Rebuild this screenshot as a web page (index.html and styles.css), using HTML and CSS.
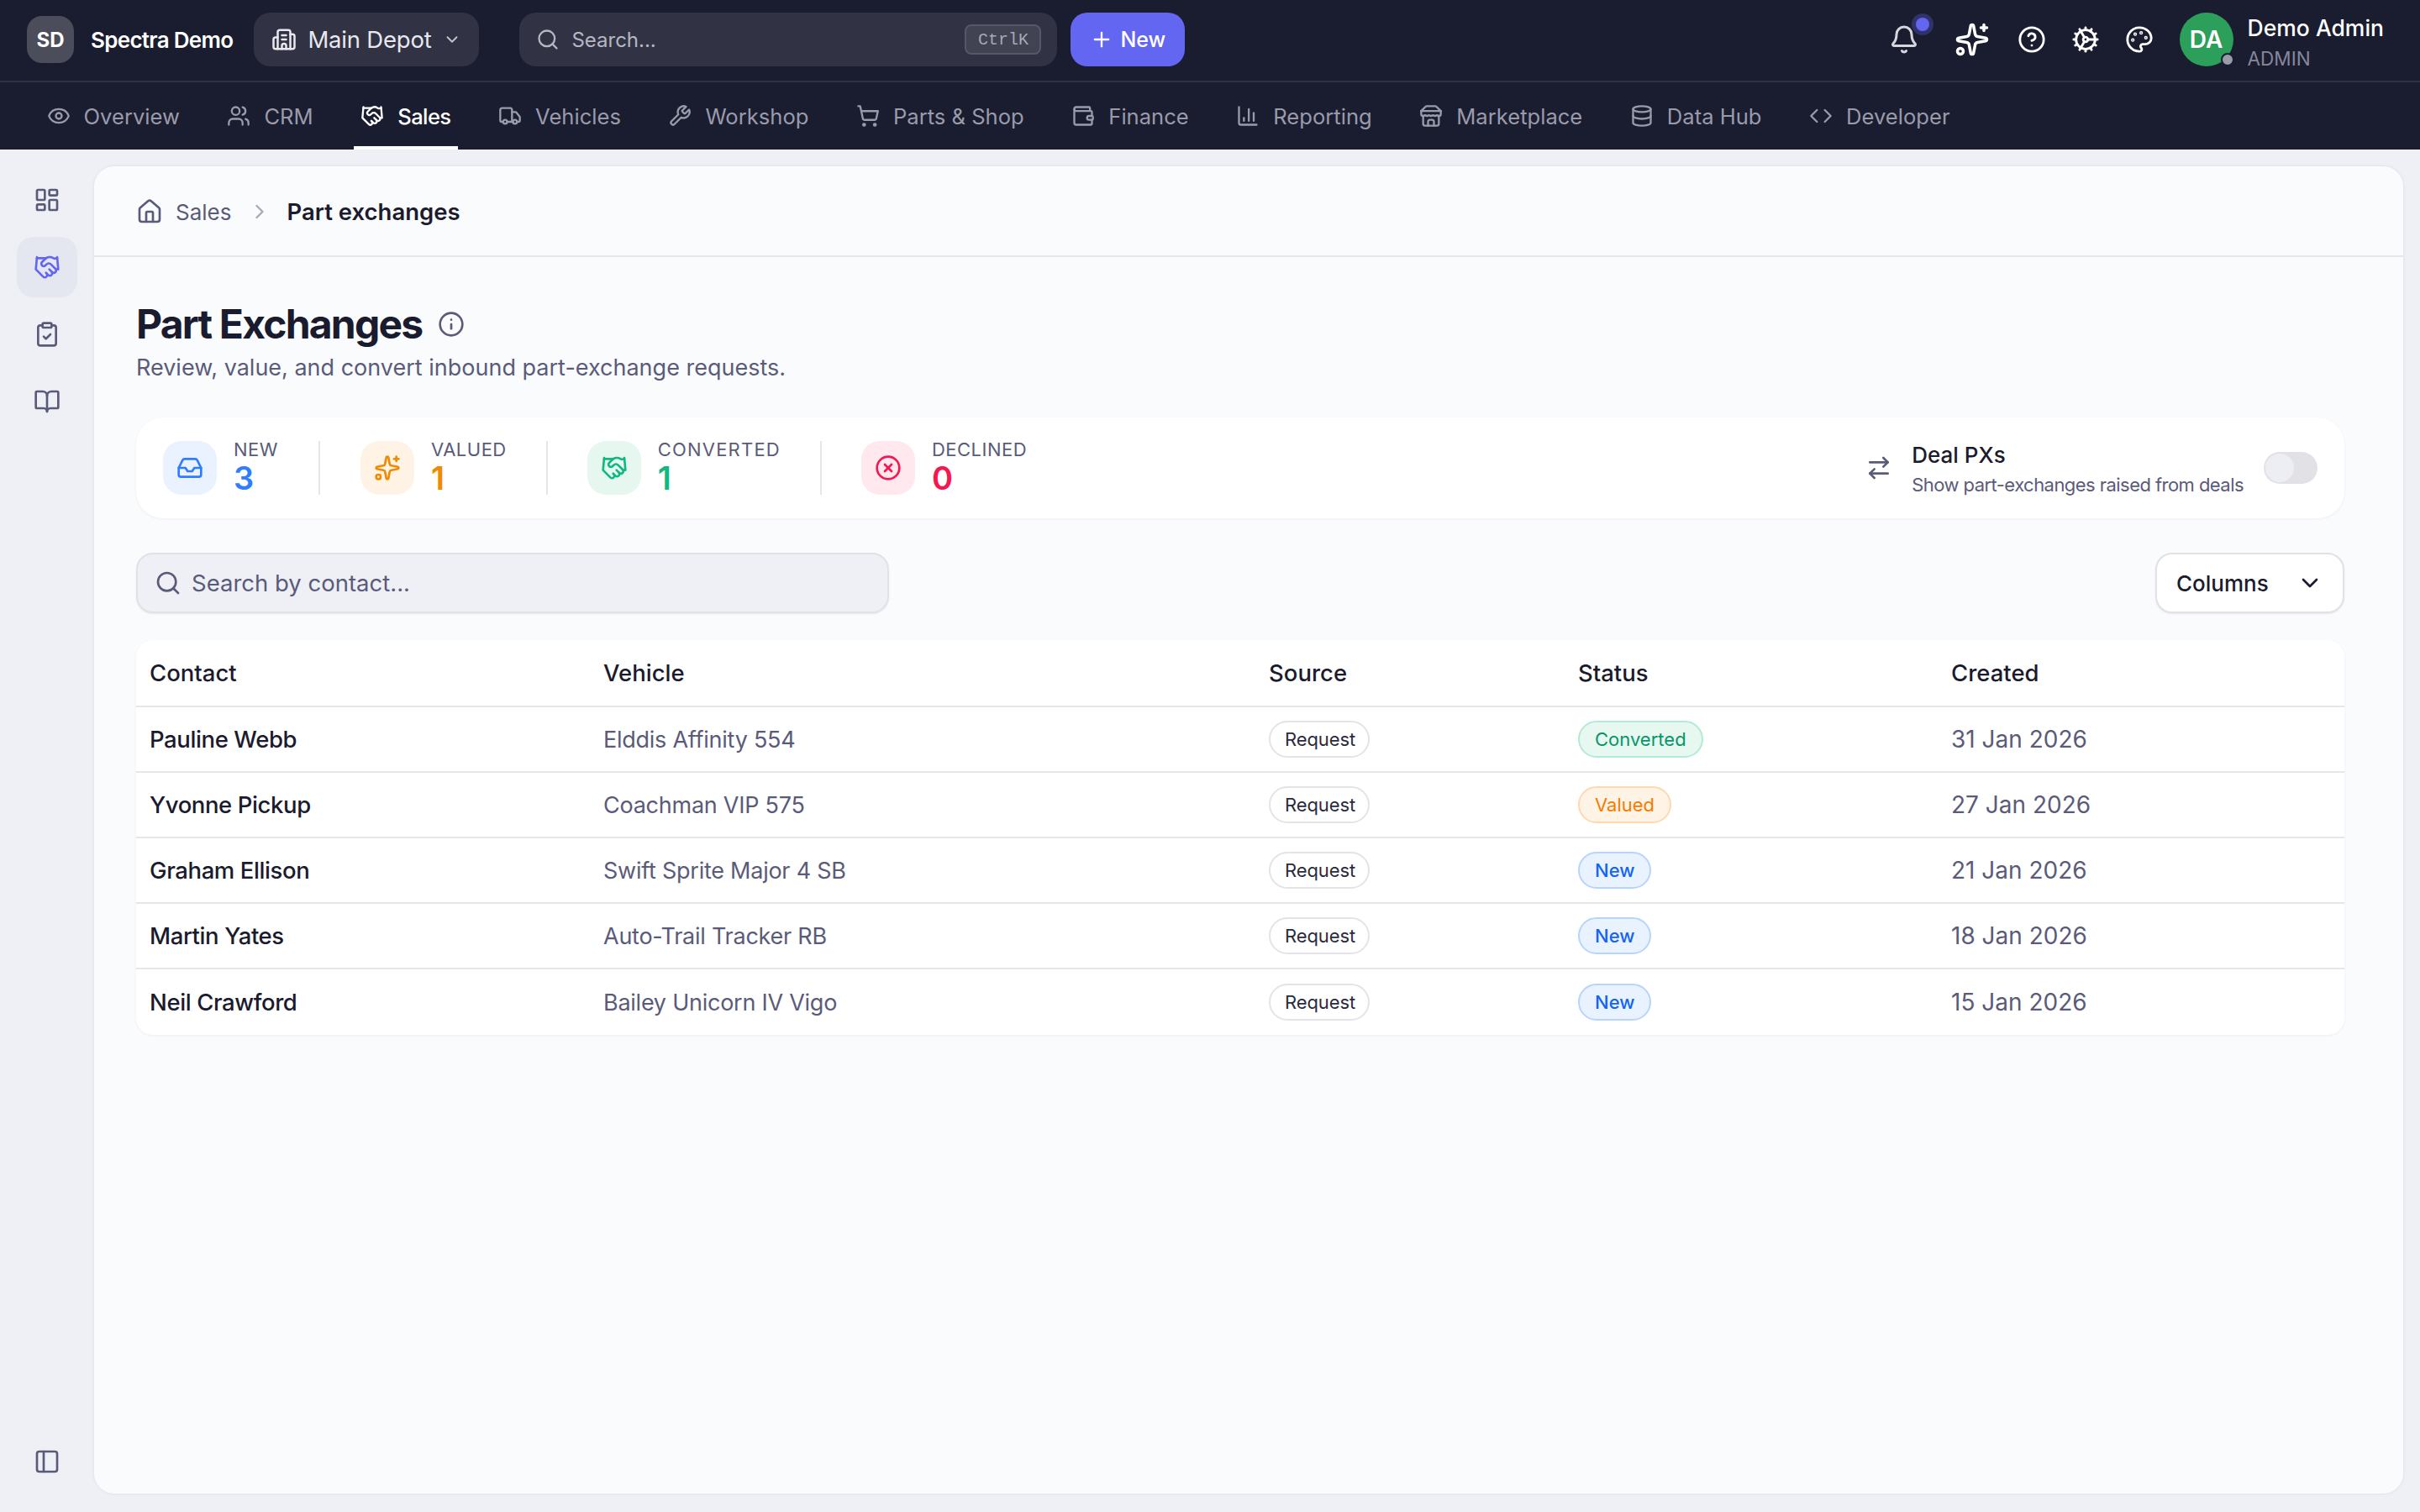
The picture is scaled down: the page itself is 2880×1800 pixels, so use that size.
FILE: index.html
```html
<!DOCTYPE html>
<html lang="en">
<head>
<meta charset="utf-8">
<title>Part Exchanges</title>
<link rel="stylesheet" href="styles.css">
</head>
<body>
<svg class="sprite" xmlns="http://www.w3.org/2000/svg">
  <symbol id="i-dash" viewBox="0 0 24 24"><rect width="7" height="9" x="3" y="3" rx="1"/><rect width="7" height="5" x="14" y="3" rx="1"/><rect width="7" height="9" x="14" y="12" rx="1"/><rect width="7" height="5" x="3" y="16" rx="1"/></symbol>
  <symbol id="i-hand" viewBox="0 0 24 24"><path d="m11 17 2 2a1 1 0 1 0 3-3"/><path d="m14 14 2.5 2.5a1 1 0 1 0 3-3l-3.88-3.88a3 3 0 0 0-4.24 0l-.88.88a1 1 0 1 1-3-3l2.81-2.81a5.79 5.79 0 0 1 7.06-.87l.47.28a2 2 0 0 0 1.42.25L21 4"/><path d="m21 3 1 11h-2"/><path d="M3 3 2 14l6.5 6.5a1 1 0 1 0 3-3"/><path d="M3 4h8"/></symbol>
  <symbol id="i-clip" viewBox="0 0 24 24"><rect width="8" height="4" x="8" y="2" rx="1" ry="1"/><path d="M16 4h2a2 2 0 0 1 2 2v14a2 2 0 0 1-2 2H6a2 2 0 0 1-2-2V6a2 2 0 0 1 2-2h2"/><path d="m9 14 2 2 4-4"/></symbol>
  <symbol id="i-book" viewBox="0 0 24 24"><path d="M12 7v14"/><path d="M3 18a1 1 0 0 1-1-1V4a1 1 0 0 1 1-1h5a4 4 0 0 1 4 4 4 4 0 0 1 4-4h5a1 1 0 0 1 1 1v13a1 1 0 0 1-1 1h-6a3 3 0 0 0-3 3 3 3 0 0 0-3-3z"/></symbol>
  <symbol id="i-panel" viewBox="0 0 24 24"><rect width="18" height="18" x="3" y="3" rx="2"/><path d="M9 3v18"/></symbol>
  <symbol id="i-house" viewBox="0 0 24 24"><path d="M15 21v-8a1 1 0 0 0-1-1h-4a1 1 0 0 0-1 1v8"/><path d="M3 10a2 2 0 0 1 .709-1.528l7-5.999a2 2 0 0 1 2.582 0l7 5.999A2 2 0 0 1 21 10v9a2 2 0 0 1-2 2H5a2 2 0 0 1-2-2z"/></symbol>
  <symbol id="i-right" viewBox="0 0 24 24"><path d="m9 18 6-6-6-6"/></symbol>
  <symbol id="i-down" viewBox="0 0 24 24"><path d="m6 9 6 6 6-6"/></symbol>
  <symbol id="i-info" viewBox="0 0 24 24"><circle cx="12" cy="12" r="10"/><path d="M12 16v-4"/><path d="M12 8h.01"/></symbol>
  <symbol id="i-inbox" viewBox="0 0 24 24"><polyline points="22 12 16 12 14 15 10 15 8 12 2 12"/><path d="M5.45 5.11 2 12v6a2 2 0 0 0 2 2h16a2 2 0 0 0 2-2v-6l-3.45-6.89A2 2 0 0 0 16.76 4H7.24a2 2 0 0 0-1.79 1.11z"/></symbol>
  <symbol id="i-spark" viewBox="0 0 24 24"><path d="M11.017 2.814a1 1 0 0 1 1.966 0l1.051 5.558a2 2 0 0 0 1.594 1.594l5.558 1.051a1 1 0 0 1 0 1.966l-5.558 1.051a2 2 0 0 0-1.594 1.594l-1.051 5.558a1 1 0 0 1-1.966 0l-1.051-5.558a2 2 0 0 0-1.594-1.594l-5.558-1.051a1 1 0 0 1 0-1.966l5.558-1.051a2 2 0 0 0 1.594-1.594z"/><path d="M20 2v4"/><path d="M22 4h-4"/><circle cx="4" cy="20" r="2"/></symbol>
  <symbol id="i-x" viewBox="0 0 24 24"><circle cx="12" cy="12" r="10"/><path d="m15 9-6 6"/><path d="m9 9 6 6"/></symbol>
  <symbol id="i-swap" viewBox="0 0 24 24"><path d="m16 3 4 4-4 4"/><path d="M20 7H4"/><path d="m8 21-4-4 4-4"/><path d="M4 17h16"/></symbol>
  <symbol id="i-search" viewBox="0 0 24 24"><path d="m21 21-4.34-4.34"/><circle cx="11" cy="11" r="8"/></symbol>
  <symbol id="i-bell" viewBox="0 0 24 24"><path d="M10.268 21a2 2 0 0 0 3.464 0"/><path d="M3.262 15.326A1 1 0 0 0 4 17h16a1 1 0 0 0 .74-1.673C19.41 13.956 18 12.499 18 8A6 6 0 0 0 6 8c0 4.499-1.411 5.956-2.738 7.326"/></symbol>
  <symbol id="i-help" viewBox="0 0 24 24"><circle cx="12" cy="12" r="10"/><path d="M9.09 9a3 3 0 0 1 5.83 1c0 2-3 3-3 3"/><path d="M12 17h.01"/></symbol>
  <symbol id="i-cog" viewBox="0 0 24 24"><path d="M12 20a8 8 0 1 0 0-16 8 8 0 0 0 0 16Z"/><path d="M12 14a2 2 0 1 0 0-4 2 2 0 0 0 0 4Z"/><path d="M12 2v2"/><path d="M12 22v-2"/><path d="m17 20.66-1-1.73"/><path d="M11 10.27 7 3.34"/><path d="m20.66 17-1.73-1"/><path d="m3.34 7 1.73 1"/><path d="M14 12h8"/><path d="M2 12h2"/><path d="m20.66 7-1.73 1"/><path d="m3.34 17 1.73-1"/><path d="m17 3.34-1 1.73"/><path d="m11 13.73-4 6.93"/></symbol>
  <symbol id="i-palette" viewBox="0 0 24 24"><path d="M12 22a1 1 0 0 1 0-20 10 9 0 0 1 10 9 5 5 0 0 1-5 5h-2.25a1.75 1.75 0 0 0-1.4 2.8l.3.4a1.75 1.75 0 0 1-1.4 2.8z"/><circle cx="13.5" cy="6.5" r=".5"/><circle cx="17.5" cy="10.5" r=".5"/><circle cx="6.5" cy="12.5" r=".5"/><circle cx="8.5" cy="7.5" r=".5"/></symbol>
  <symbol id="i-eye" viewBox="0 0 24 24"><path d="M2.062 12.348a1 1 0 0 1 0-.696 10.75 10.75 0 0 1 19.876 0 1 1 0 0 1 0 .696 10.75 10.75 0 0 1-19.876 0"/><circle cx="12" cy="12" r="3"/></symbol>
  <symbol id="i-users" viewBox="0 0 24 24"><path d="M16 21v-2a4 4 0 0 0-4-4H6a4 4 0 0 0-4 4v2"/><path d="M16 3.128a4 4 0 0 1 0 7.744"/><path d="M22 21v-2a4 4 0 0 0-3-3.87"/><circle cx="9" cy="7" r="4"/></symbol>
  <symbol id="i-truck" viewBox="0 0 24 24"><path d="M14 18V6a2 2 0 0 0-2-2H4a2 2 0 0 0-2 2v11a1 1 0 0 0 1 1h2"/><path d="M15 18H9"/><path d="M19 18h2a1 1 0 0 0 1-1v-3.65a1 1 0 0 0-.22-.624l-3.48-4.35A1 1 0 0 0 17.52 8H14"/><circle cx="17" cy="18" r="2"/><circle cx="7" cy="18" r="2"/></symbol>
  <symbol id="i-wrench" viewBox="0 0 24 24"><path d="M14.7 6.3a1 1 0 0 0 0 1.4l1.6 1.6a1 1 0 0 0 1.4 0l3.77-3.77a6 6 0 0 1-7.94 7.94l-6.91 6.91a2.12 2.12 0 0 1-3-3l6.91-6.91a6 6 0 0 1 7.94-7.94l-3.76 3.76z"/></symbol>
  <symbol id="i-cart" viewBox="0 0 24 24"><circle cx="8" cy="21" r="1"/><circle cx="19" cy="21" r="1"/><path d="M2.05 2.05h2l2.66 12.42a2 2 0 0 0 2 1.58h9.78a2 2 0 0 0 1.95-1.57l1.65-7.43H5.12"/></symbol>
  <symbol id="i-wallet" viewBox="0 0 24 24"><path d="M19 7V4a1 1 0 0 0-1-1H5a2 2 0 0 0 0 4h15a1 1 0 0 1 1 1v4h-3a2 2 0 0 0 0 4h3a1 1 0 0 0 1-1v-2a1 1 0 0 0-1-1"/><path d="M3 5v14a2 2 0 0 0 2 2h15a1 1 0 0 0 1-1v-4"/></symbol>
  <symbol id="i-chart" viewBox="0 0 24 24"><path d="M3 3v16a2 2 0 0 0 2 2h16"/><path d="M18 17V9"/><path d="M13 17V5"/><path d="M8 17v-3"/></symbol>
  <symbol id="i-store" viewBox="0 0 24 24"><path d="m2 7 4.41-4.41A2 2 0 0 1 7.83 2h8.34a2 2 0 0 1 1.42.59L22 7"/><path d="M4 12v8a2 2 0 0 0 2 2h12a2 2 0 0 0 2-2v-8"/><path d="M15 22v-4a2 2 0 0 0-2-2h-2a2 2 0 0 0-2 2v4"/><path d="M2 7h20"/><path d="M22 7v3a2 2 0 0 1-2 2a2.7 2.7 0 0 1-1.59-.63.7.7 0 0 0-.82 0A2.7 2.7 0 0 1 16 12a2.7 2.7 0 0 1-1.59-.63.7.7 0 0 0-.82 0A2.7 2.7 0 0 1 12 12a2.7 2.7 0 0 1-1.59-.63.7.7 0 0 0-.82 0A2.7 2.7 0 0 1 8 12a2.7 2.7 0 0 1-1.59-.63.7.7 0 0 0-.82 0A2.7 2.7 0 0 1 4 12a2 2 0 0 1-2-2V7"/></symbol>
  <symbol id="i-db" viewBox="0 0 24 24"><ellipse cx="12" cy="5" rx="9" ry="3"/><path d="M3 5V19A9 3 0 0 0 21 19V5"/><path d="M3 12A9 3 0 0 0 21 12"/></symbol>
  <symbol id="i-code" viewBox="0 0 24 24"><path d="m16 18 6-6-6-6"/><path d="m8 6-6 6 6 6"/></symbol>
  <symbol id="i-build" viewBox="0 0 24 24"><path d="M10 12h4"/><path d="M10 8h4"/><path d="M14 21v-3a2 2 0 0 0-4 0v3"/><path d="M6 10H4a2 2 0 0 0-2 2v7a2 2 0 0 0 2 2h16a2 2 0 0 0 2-2V9a2 2 0 0 0-2-2h-2"/><path d="M6 21V5a2 2 0 0 1 2-2h8a2 2 0 0 1 2 2v16"/></symbol>
  <symbol id="i-plus" viewBox="0 0 24 24"><path d="M5 12h14"/><path d="M12 5v14"/></symbol>
</svg>

<div class="app">
  <header class="topbar">
    <div class="toprow">
      <div class="brand">
        <span class="brand-mark">SD</span>
        <span class="brand-name">Spectra Demo</span>
      </div>
      <button class="depot">
        <svg class="ic ic-30"><use href="#i-build"/></svg>
        <span class="depot-name">Main Depot</span>
        <svg class="ic ic-22 depot-chev"><use href="#i-down"/></svg>
      </button>
      <div class="topsearch">
        <svg class="ic ic-28"><use href="#i-search"/></svg>
        <span class="topsearch-text">Search...</span>
        <kbd class="kbd">CtrlK</kbd>
      </div>
      <button class="newbtn">
        <svg class="ic ic-28"><use href="#i-plus"/></svg>
        <span>New</span>
      </button>
      <div class="actions">
        <span class="action action-bell">
          <svg class="ic ic-36"><use href="#i-bell"/></svg>
          <span class="notif-dot"></span>
        </span>
        <span class="action action-spark"><svg class="ic ic-42"><use href="#i-spark"/></svg></span>
        <span class="action"><svg class="ic ic-34"><use href="#i-help"/></svg></span>
        <span class="action"><svg class="ic ic-34"><use href="#i-cog"/></svg></span>
        <span class="action"><svg class="ic ic-34"><use href="#i-palette"/></svg></span>
      </div>
      <div class="user">
        <span class="avatar">DA<span class="avatar-dot"></span></span>
        <span class="user-text">
          <span class="user-name">Demo Admin</span>
          <span class="user-role">ADMIN</span>
        </span>
      </div>
    </div>
    <nav class="navrow">
      <a class="navitem"><svg class="ic ic-28"><use href="#i-eye"/></svg>Overview</a>
      <a class="navitem"><svg class="ic ic-28"><use href="#i-users"/></svg>CRM</a>
      <a class="navitem is-active"><svg class="ic ic-28"><use href="#i-hand"/></svg>Sales</a>
      <a class="navitem"><svg class="ic ic-28"><use href="#i-truck"/></svg>Vehicles</a>
      <a class="navitem"><svg class="ic ic-28"><use href="#i-wrench"/></svg>Workshop</a>
      <a class="navitem"><svg class="ic ic-28"><use href="#i-cart"/></svg>Parts &amp; Shop</a>
      <a class="navitem"><svg class="ic ic-28"><use href="#i-wallet"/></svg>Finance</a>
      <a class="navitem"><svg class="ic ic-28"><use href="#i-chart"/></svg>Reporting</a>
      <a class="navitem"><svg class="ic ic-28"><use href="#i-store"/></svg>Marketplace</a>
      <a class="navitem"><svg class="ic ic-28"><use href="#i-db"/></svg>Data Hub</a>
      <a class="navitem"><svg class="ic ic-28"><use href="#i-code"/></svg>Developer</a>
    </nav>
  </header>

  <div class="workspace">
    <aside class="rail">
      <span class="railitem"><svg class="ic ic-32"><use href="#i-dash"/></svg></span>
      <span class="railitem is-active"><svg class="ic ic-32"><use href="#i-hand"/></svg></span>
      <span class="railitem"><svg class="ic ic-32"><use href="#i-clip"/></svg></span>
      <span class="railitem"><svg class="ic ic-32"><use href="#i-book"/></svg></span>
      <span class="railitem rail-bottom"><svg class="ic ic-32"><use href="#i-panel"/></svg></span>
    </aside>

    <main class="card">
      <div class="crumbs">
        <svg class="ic ic-32 crumb-home"><use href="#i-house"/></svg>
        <span class="crumb">Sales</span>
        <svg class="ic ic-28 crumb-sep"><use href="#i-right"/></svg>
        <span class="crumb-current">Part exchanges</span>
      </div>

      <div class="content">
        <div class="titlerow">
          <h1 class="title">Part Exchanges</h1>
          <svg class="ic ic-32 title-info"><use href="#i-info"/></svg>
        </div>
        <p class="subtitle">Review, value, and convert inbound part-exchange requests.</p>

        <section class="stats">
          <div class="stat">
            <span class="tile tile-blue"><svg class="ic ic-32"><use href="#i-inbox"/></svg></span>
            <span class="stat-text"><span class="stat-label">NEW</span><span class="stat-value val-blue">3</span></span>
          </div>
          <div class="stat">
            <span class="tile tile-orange"><svg class="ic ic-32"><use href="#i-spark"/></svg></span>
            <span class="stat-text"><span class="stat-label">VALUED</span><span class="stat-value val-orange">1</span></span>
          </div>
          <div class="stat">
            <span class="tile tile-green"><svg class="ic ic-32"><use href="#i-hand"/></svg></span>
            <span class="stat-text"><span class="stat-label stat-label-wide">CONVERTED</span><span class="stat-value val-green">1</span></span>
          </div>
          <div class="stat">
            <span class="tile tile-red"><svg class="ic ic-32"><use href="#i-x"/></svg></span>
            <span class="stat-text"><span class="stat-label">DECLINED</span><span class="stat-value val-red">0</span></span>
          </div>
          <div class="dealpx">
            <svg class="ic ic-32 dealpx-icon"><use href="#i-swap"/></svg>
            <span class="dealpx-text">
              <span class="dealpx-title">Deal PXs</span>
              <span class="dealpx-sub">Show part-exchanges raised from deals</span>
            </span>
            <span class="toggle"><span class="toggle-knob"></span></span>
          </div>
        </section>

        <div class="tools">
          <div class="contact-search">
            <svg class="ic ic-32"><use href="#i-search"/></svg>
            <span>Search by contact...</span>
          </div>
          <button class="columns">
            <span>Columns</span>
            <svg class="ic ic-32"><use href="#i-down"/></svg>
          </button>
        </div>

        <table class="grid">
          <colgroup>
            <col class="c1"><col class="c2"><col class="c3"><col class="c4"><col class="c5">
          </colgroup>
          <thead>
            <tr><th>Contact</th><th>Vehicle</th><th>Source</th><th>Status</th><th>Created</th></tr>
          </thead>
          <tbody>
            <tr><td class="name">Pauline Webb</td><td class="muted">Elddis Affinity 554</td><td><span class="pill pill-source">Request</span></td><td><span class="pill pill-green">Converted</span></td><td class="date">31 Jan 2026</td></tr>
            <tr><td class="name">Yvonne Pickup</td><td class="muted">Coachman VIP 575</td><td><span class="pill pill-source">Request</span></td><td><span class="pill pill-orange">Valued</span></td><td class="date">27 Jan 2026</td></tr>
            <tr><td class="name">Graham Ellison</td><td class="muted">Swift Sprite Major 4 SB</td><td><span class="pill pill-source">Request</span></td><td><span class="pill pill-blue">New</span></td><td class="date">21 Jan 2026</td></tr>
            <tr><td class="name">Martin Yates</td><td class="muted">Auto-Trail Tracker RB</td><td><span class="pill pill-source">Request</span></td><td><span class="pill pill-blue">New</span></td><td class="date">18 Jan 2026</td></tr>
            <tr><td class="name">Neil Crawford</td><td class="muted">Bailey Unicorn IV Vigo</td><td><span class="pill pill-source">Request</span></td><td><span class="pill pill-blue">New</span></td><td class="date">15 Jan 2026</td></tr>
          </tbody>
        </table>
      </div>
    </main>
  </div>
</div>
</body>
</html>
```

FILE: styles.css
```css
* { box-sizing: border-box; }
html, body { margin: 0; height: 100%; }
body {
  font-family: Inter, "Liberation Sans", sans-serif;
  color: #1a1b2e;
  background: #eef0f5;
  overflow: hidden;
}
.sprite { display: none; }
.ic {
  display: block;
  flex: none;
  fill: none;
  stroke: currentColor;
  stroke-width: 2;
  stroke-linecap: round;
  stroke-linejoin: round;
}
.ic-22 { width: 22px; height: 22px; }
.ic-28 { width: 28px; height: 28px; }
.ic-30 { width: 30px; height: 30px; }
.ic-32 { width: 32px; height: 32px; }
.ic-34 { width: 34px; height: 34px; }
.ic-36 { width: 36px; height: 36px; }
.ic-42 { width: 42px; height: 42px; }
button { font: inherit; border: 0; margin: 0; }

.app { height: 100vh; display: flex; flex-direction: column; }
.topbar { background: #1a1c30; color: #fff; flex: none; }
.toprow {
  height: 98px;
  padding: 0 43px 2px 32px;
  display: flex;
  align-items: center;
  border-bottom: 2px solid #2e3044;
}
.brand { display: flex; align-items: center; gap: 20px; margin-right: 25px; }
.brand-mark {
  width: 56px; height: 56px;
  border-radius: 18px;
  background: #4c4d5b;
  display: flex; align-items: center; justify-content: center;
  font-size: 24px; font-weight: 700;
}
.brand-name { font-size: 26px; font-weight: 600; letter-spacing: -0.7px; white-space: nowrap; }
.depot {
  height: 64px;
  width: 268px;
  padding: 0 20px 0 21px;
  display: flex; align-items: center; gap: 13px;
  border-radius: 20px;
  background: #313344;
  color: #e8e8ee;
  font-size: 27.5px;
}
.depot-name { white-space: nowrap; letter-spacing: -0.2px; }
.depot-chev { margin-left: auto; margin-right: 1px; color: #c4c5ce; }
.topsearch {
  margin-left: 48px;
  width: 640px;
  height: 64px;
  padding: 0 20px;
  display: flex; align-items: center; gap: 14px;
  border-radius: 20px;
  background: #313344;
  color: #b6b7c2;
  font-size: 24px;
}
.topsearch-text { flex: 1; }
.kbd {
  font-family: "Liberation Mono", monospace;
  font-size: 20px;
  height: 36px;
  width: 91px;
  display: flex; align-items: center; justify-content: center;
  margin-right: -1px;
  border: 2px solid #56576a;
  border-radius: 8px;
  background: #414252;
  color: #a8a9b4;
}
.newbtn {
  margin-left: 16px;
  width: 136px;
  height: 64px;
  display: flex; align-items: center; justify-content: center; gap: 8px;
  border-radius: 20px;
  background: #6366f1;
  color: #fff;
  font-size: 25px;
  font-weight: 500;
}
.actions { margin-left: auto; display: flex; align-items: center; gap: 30px; color: #fff; }
.action { position: relative; display: block; }
.action-bell { color: #d6d7dd; }
.action-spark { margin: 0 3px 0 12px; }
.notif-dot {
  position: absolute;
  top: -8px;
  right: -12px;
  width: 16px; height: 16px;
  border-radius: 50%;
  background: #6366f1;
  box-shadow: 0 0 0 5px rgba(99, 102, 241, .3);
}
.user { margin-left: 31px; display: flex; align-items: center; gap: 17px; }
.avatar {
  position: relative;
  width: 64px; height: 64px;
  border-radius: 50%;
  background: #2ca05a;
  display: flex; align-items: center; justify-content: center;
  font-size: 28px; font-weight: 600;
}
.avatar-dot {
  position: absolute;
  right: -1px; bottom: 0;
  width: 16px; height: 16px;
  border-radius: 50%;
  background: #9a9caa;
  border: 2px solid #1a1c30;
}
.user-text { display: flex; flex-direction: column; gap: 6px; padding-top: 8px; }
.user-name { font-size: 26.5px; line-height: 32px; font-weight: 500; white-space: nowrap; }
.user-role { font-size: 22.5px; line-height: 30px; color: #86889a; }

.navrow { height: 80px; padding-left: 47.5px; display: flex; gap: 40.5px; }
.navitem {
  position: relative;
  height: 80px;
  padding: 0 8px;
  display: flex; align-items: center; gap: 16px;
  font-size: 25.6px;
  color: #9a9baa;
  white-space: nowrap;
}
.navitem.is-active { color: #fff; font-weight: 500; letter-spacing: -0.6px; }
.navitem.is-active::after {
  content: "";
  position: absolute;
  left: 0; right: 0; bottom: 0;
  height: 4px;
  background: #fff;
}

.workspace { flex: 1; display: flex; min-height: 0; }
.rail {
  width: 112px;
  flex: none;
  padding: 24px 20px 24px;
  display: flex; flex-direction: column; gap: 8px;
  color: #5a5b7a;
}
.railitem {
  height: 72px;
  display: flex; align-items: center; justify-content: center;
  border-radius: 20px;
}
.railitem.is-active { background: #e4e7ef; color: #6366f1; }
.rail-bottom { margin-top: auto; }

.card {
  flex: 1;
  margin: 20px 20px 22px 0;
  background: #fafbfd;
  border-radius: 24px;
  box-shadow: 0 0 4px rgba(30, 30, 60, .08);
  overflow: hidden;
}
.crumbs {
  height: 108px;
  padding: 2px 0 0 50px;
  display: flex; align-items: center;
  border-bottom: 2px solid #e6e6ea;
  font-size: 26px;
  color: #5a5b7a;
}
.crumb-home { margin-right: 15px; }
.crumb-sep { margin: 0 18px 0 20px; color: #a9aab8; }
.crumb-current { color: #1a1b2e; font-weight: 600; font-size: 27.5px; }

.content { padding: 48px 70px 0 50px; }
.titlerow { display: flex; align-items: center; gap: 19px; height: 64px; }
.title { margin: 0; font-size: 48px; font-weight: 700; letter-spacing: -1.8px; line-height: 64px; }
.title-info { color: #5a5b7a; }
.subtitle { margin: 1px 0 0; font-size: 27px; line-height: 38px; color: #5a5b7a; }

.stats {
  margin-top: 40px;
  height: 120px;
  padding: 0 32px;
  display: flex; align-items: center;
  background: #fff;
  border-radius: 32px;
  box-shadow: 0 1px 3px rgba(30, 30, 60, .06);
}
.stat {
  display: flex; align-items: center; gap: 20px;
  height: 64px;
  padding-right: 47px;
  margin-right: 47px;
  border-right: 2px solid #e6e6ea;
}
.stat:first-child { padding-right: 48px; margin-right: 48px; }
.stat:nth-child(4) { border-right: 0; }
.tile {
  width: 64px; height: 64px;
  border-radius: 22px;
  display: flex; align-items: center; justify-content: center;
}
.tile-blue { background: #eaf2ff; color: #2f7dff; }
.tile-orange { background: #fff3e6; color: #f08a00; }
.tile-green { background: #e6f7f0; color: #10b981; }
.tile-red { background: #ffe8ee; color: #f5174f; }
.stat-text { display: flex; flex-direction: column; padding-bottom: 4px; }
.stat-label { font-size: 22px; line-height: 28px; letter-spacing: 0.5px; color: #5a5b7a; }
.stat-label-wide { letter-spacing: 1.2px; }
.stat-value { font-size: 38px; line-height: 40px; font-weight: 600; }
.val-blue { color: #2f7dff; }
.val-orange { color: #f08a00; }
.val-green { color: #10b981; }
.val-red { color: #f5174f; }
.dealpx { margin-left: auto; display: flex; align-items: center; }
.dealpx-icon { color: #5a5b7a; margin-right: 23px; }
.dealpx-text { display: flex; flex-direction: column; gap: 2px; padding-top: 2px; }
.dealpx-title { font-size: 26px; line-height: 36px; font-weight: 500; }
.dealpx-sub { font-size: 22px; line-height: 30px; color: #5a5b7a; letter-spacing: -0.55px; }
.toggle {
  margin-left: 24px;
  width: 64px; height: 38px;
  padding: 2px;
  border-radius: 19px;
  background: #e2e2e6;
  display: block;
}
.toggle-knob { display: block; width: 34px; height: 34px; border-radius: 50%; background: #eceef4; }

.tools { margin-top: 41px; display: flex; justify-content: space-between; height: 72px; }
.contact-search {
  width: 896px;
  padding: 0 20px;
  display: flex; align-items: center; gap: 12px;
  background: #eef0f5;
  border: 2px solid #e2e2e6;
  border-radius: 20px;
  box-shadow: 0 1px 2px rgba(30, 30, 60, .08);
  color: #5a5b7a;
  font-size: 27.5px;
}
.columns {
  width: 225px;
  padding: 0 23px 0 23px;
  display: flex; align-items: center; justify-content: space-between;
  background: #fff;
  border: 2px solid #e2e2e6;
  border-radius: 20px;
  box-shadow: 0 1px 2px rgba(30, 30, 60, .08);
  color: #1a1b2e;
  font-size: 26px;
  font-weight: 500;
}

.grid {
  margin-top: 32px;
  width: 2628px;
  table-layout: fixed;
  border-collapse: separate;
  border-spacing: 0;
  background: #fff;
  border-radius: 20px;
  box-shadow: 0 1px 3px rgba(30, 30, 60, .06);
  font-size: 27.5px;
}
.c1 { width: 540px; }
.c2 { width: 792px; }
.c3 { width: 368px; }
.c4 { width: 444px; }
.c5 { width: 484px; }
.grid th {
  height: 80px;
  padding: 0 16px;
  text-align: left;
  font-weight: 500;
  border-bottom: 2px solid #e6e6ea;
}
.grid td {
  height: 78px;
  padding: 0 16px;
  border-bottom: 2px solid #e6e6ea;
}
.grid tr:last-child td { border-bottom: 0; }
.name { font-weight: 500; letter-spacing: -0.4px; }
.muted { color: #5a5b7a; font-size: 27px; letter-spacing: -0.25px; }
.date { color: #5a5b7a; font-size: 28px; }
.pill {
  display: inline-flex; align-items: center;
  height: 44px;
  padding: 0 18px;
  border: 2px solid #e4e4e8;
  border-radius: 22px;
  background: #fff;
  font-size: 22px;
  color: #2a2b3e;
  vertical-align: middle;
}
.pill-source { padding: 0 15px 0 17px; letter-spacing: -0.1px; }
.pill-green { background: #e6f8f0; border-color: #b3ead5; color: #059669; }
.pill-orange { background: #fff3e6; border-color: #fdd9b0; color: #f57c00; }
.pill-blue { background: #e9f2ff; border-color: #b8d4fb; color: #1464f4; font-weight: 500; }
```
